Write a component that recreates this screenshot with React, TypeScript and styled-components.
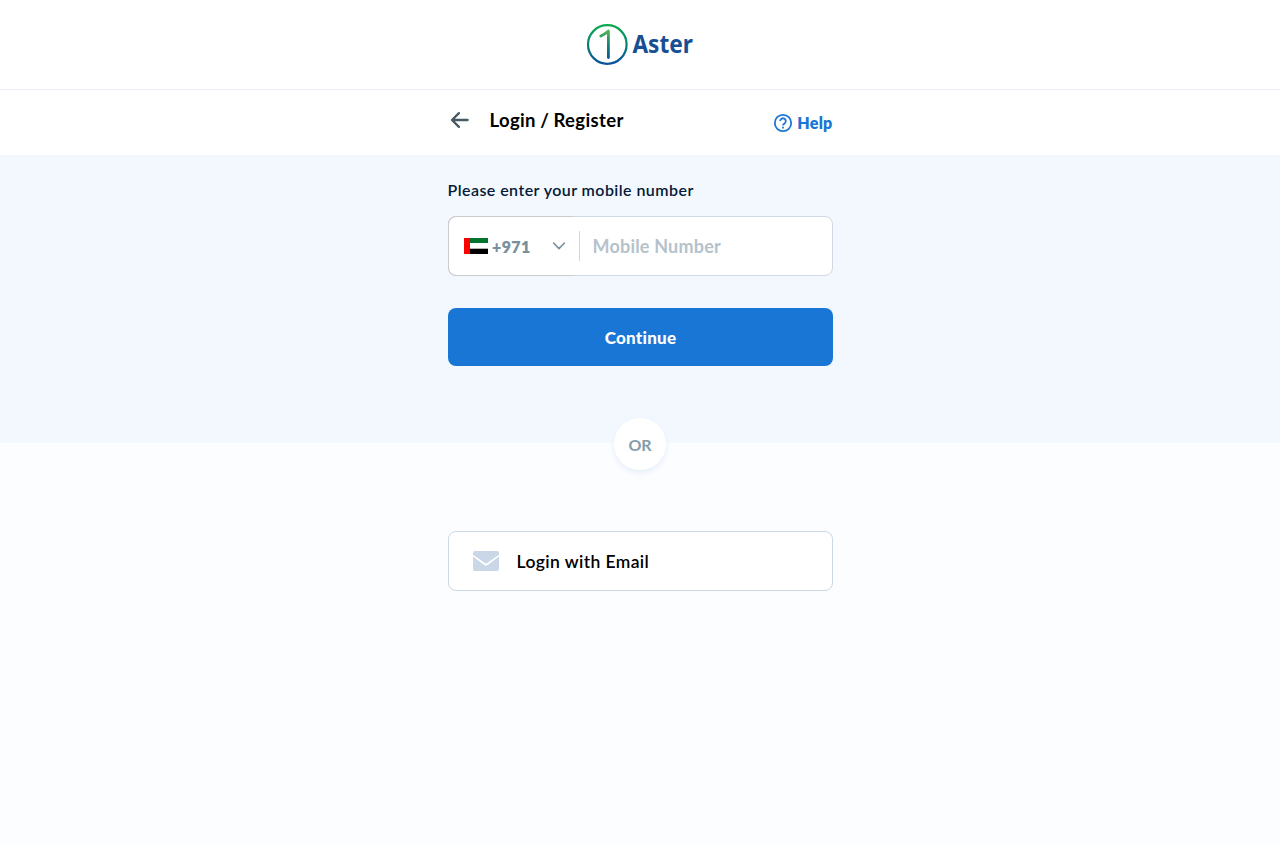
import React from 'react';
import styled, { createGlobalStyle } from 'styled-components';

const GlobalStyle = createGlobalStyle`
  * { box-sizing: border-box; }
  body { margin: 0; background: #fcfdff; font-family: Lato, "Open Sans", sans-serif; }
  button, input { font-family: inherit; margin: 0; }
`;

const Page = styled.div`
  display: flex;
  flex-direction: column;
  min-height: 845px;
`;

const Brand = styled.header`
  display: flex;
  justify-content: center;
  height: 90px;
  padding-top: 20px;
  background: #fff;
  border-bottom: 1px solid #edf0f7;
`;

const LogoArt = styled.svg`
  overflow: visible;
`;

const TitleBar = styled.div`
  display: flex;
  justify-content: center;
  height: 65px;
  background: #fff;
`;

const Column = styled.div`
  display: flex;
  flex-direction: column;
  width: 385px;
  margin-left: 1px;
`;

const TitleRow = styled.div`
  display: flex;
  justify-content: space-between;
  width: 385px;
`;

const Heading = styled.div`
  display: flex;
  align-items: flex-start;
  padding: 18px 0 0;
`;

const BackButton = styled.button`
  display: flex;
  width: 24px;
  height: 24px;
  padding: 0;
  border: 0;
  background: none;
`;

const Title = styled.h1`
  margin: 0 0 0 18px;
  font-size: 18.5px;
  line-height: 25px;
  font-weight: 700;
  letter-spacing: 0.35px;
  word-spacing: -0.5px;
  color: #000;
`;

const Help = styled.a`
  display: flex;
  align-items: center;
  height: 24px;
  margin-top: 21px;
  gap: 4px;
  font-size: 16px;
  line-height: 20px;
  font-weight: 800;
  letter-spacing: 0.25px;
  color: #1976d5;
`;

const PhoneSection = styled.section`
  display: flex;
  justify-content: center;
  height: 288px;
  background: #f3f8ff;
`;

const Label = styled.label`
  margin: 23px 0 0 -0.5px;
  height: 25px;
  line-height: 23px;
  font-size: 16px;
  font-weight: 600;
  letter-spacing: 0.44px;
  color: #031b37;
`;

const PhoneField = styled.div`
  display: flex;
  align-items: center;
  height: 60px;
  margin-top: 13px;
  background: #fff;
  border: 1px solid #cfd8e4;
  border-radius: 8px;
`;

const CountryPicker = styled.div`
  display: flex;
  align-items: center;
  align-self: stretch;
  width: 124px;
  margin: -1px 0 -1px -1px;
  padding-left: 15px;
  border: 1px solid #ccc;
  border-right: 0;
  border-radius: 8px 0 0 8px;
`;

const DialCode = styled.span`
  width: 60px;
  margin-left: 4px;
  padding-top: 2px;
  font-size: 16px;
  line-height: 20px;
  font-weight: 800;
  letter-spacing: 0.4px;
  color: #78909c;
`;

const Divider = styled.span`
  width: 1px;
  height: 30px;
  margin-left: 7px;
  background: #cfd8dc;
`;

const PhoneInput = styled.input`
  flex: 1;
  min-width: 0;
  height: 40px;
  padding: 0 12px 0 12.5px;
  border: 0;
  outline: 0;
  background: transparent;
  font-size: 18px;
  font-weight: 700;
  letter-spacing: 0.2px;
  &::placeholder { color: #b4c2cb; opacity: 1; }
`;

const ContinueButton = styled.button`
  height: 58px;
  margin-top: 32px;
  padding: 0;
  border: 0;
  border-radius: 8px;
  background: #1976d5;
  color: #fff;
  font-size: 17px;
  font-weight: 900;
  letter-spacing: 0.25px;
`;

const EmailSection = styled.section`
  display: flex;
  flex-direction: column;
  align-items: center;
`;

const OrBadge = styled.div`
  display: flex;
  align-items: center;
  justify-content: center;
  width: 52px;
  height: 52px;
  margin-top: -25px;
  padding-top: 1px;
  border-radius: 50%;
  background: #fff;
  box-shadow: 0 3px 6px #e5effa;
  font-size: 16px;
  font-weight: 700;
  color: #859daa;
`;

const EmailButton = styled.button`
  display: flex;
  align-items: center;
  height: 60px;
  margin-top: 61px;
  padding: 0 24px;
  border: 1px solid #cbd8e6;
  border-radius: 8px;
  background: #fff;
  color: #000;
`;

const EmailText = styled.span`
  margin-left: 17.5px;
  font-size: 17.5px;
  font-weight: 600;
  letter-spacing: 0.4px;
`;

const Logo = () => (
  <LogoArt width="110" height="48" viewBox="0 0 110 48" role="img" aria-label="Aster">
    <defs>
      <linearGradient id="ring" x1="0" y1="4" x2="0" y2="45" gradientUnits="userSpaceOnUse">
        <stop offset="0" stopColor="#0ead4d" />
        <stop offset="0.5" stopColor="#078070" />
        <stop offset="1" stopColor="#0a509e" />
      </linearGradient>
      <linearGradient id="digit" x1="0" y1="10" x2="0" y2="40" gradientUnits="userSpaceOnUse">
        <stop offset="0" stopColor="#55b553" />
        <stop offset="0.5" stopColor="#168178" />
        <stop offset="1" stopColor="#0a509e" />
      </linearGradient>
    </defs>
    <circle cx="22.3" cy="24.5" r="19.3" fill="none" stroke="url(#ring)" strokeWidth="2.2" />
    <path d="M15.8 16.1 Q20.2 13.8 23.4 11.1 L23.4 37.5" fill="none" stroke="url(#digit)" strokeWidth="2.8" strokeLinecap="round" strokeLinejoin="round" />
    <text x="47.4" y="32.6" textLength="60.5" lengthAdjust="spacingAndGlyphs" fontFamily="Noto Sans, Open Sans, sans-serif" fontWeight="700" fontSize="24.2" fill="#174f94">Aster</text>
  </LogoArt>
);

const BackArrow = () => (
  <svg width="24" height="24" viewBox="0 0 24 24" fill="none" stroke="#455a64" strokeWidth="2.3" strokeLinecap="round" strokeLinejoin="round">
    <path d="M19.6 12H4.1M10.9 5.1L4 12l6.9 6.9" />
  </svg>
);

const HelpIcon = () => (
  <svg width="20" height="20" viewBox="0 0 20 20" fill="none" stroke="#1976d5" strokeWidth="1.8">
    <circle cx="10" cy="10" r="8.2" />
    <path d="M7.2 8.1a2.8 2.8 0 1 1 4.4 2.3c-1 .7-1.6 1.1-1.6 2.1" />
    <path d="M10 13.7v1.7" />
  </svg>
);

const Flag = () => (
  <svg width="24" height="16" viewBox="0 0 24 16">
    <path fill="#00732f" d="M0 0h24v5H0z" />
    <path fill="#fff" d="M0 5h24v6H0z" />
    <path fill="#000" d="M0 10.7h24V16H0z" />
    <path fill="#f00" d="M0 0h6v16H0z" />
  </svg>
);

const Chevron = () => (
  <svg width="14" height="10" viewBox="0 0 14 10" fill="none" stroke="#78909c" strokeWidth="1.6" strokeLinecap="round" strokeLinejoin="round">
    <path d="M1.6 2L7 7.6 12.4 2" />
  </svg>
);

const Envelope = () => (
  <svg width="26" height="20" viewBox="0 0 26 20" fill="#cad7e7">
    <path d="M2 0h22a2 2 0 0 1 2 2v1.7L14.2 12a2 2 0 0 1-2.4 0L0 3.7V2a2 2 0 0 1 2-2z" />
    <path d="M0 5.6l11.2 8.4a3 3 0 0 0 3.6 0L26 5.6V18a2 2 0 0 1-2 2H2a2 2 0 0 1-2-2z" />
  </svg>
);

export default function App() {
  return (
    <Page>
      <GlobalStyle />
      <Brand><Logo /></Brand>
      <TitleBar>
        <TitleRow>
          <Heading>
            <BackButton aria-label="Back"><BackArrow /></BackButton>
            <Title>Login / Register</Title>
          </Heading>
          <Help><HelpIcon />Help</Help>
        </TitleRow>
      </TitleBar>
      <PhoneSection>
        <Column>
          <Label htmlFor="mobile">Please enter your mobile number</Label>
          <PhoneField>
            <CountryPicker>
              <Flag />
              <DialCode>+971</DialCode>
              <Chevron />
            </CountryPicker>
            <Divider />
            <PhoneInput id="mobile" placeholder="Mobile Number" />
          </PhoneField>
          <ContinueButton>Continue</ContinueButton>
        </Column>
      </PhoneSection>
      <EmailSection>
        <OrBadge>OR</OrBadge>
        <Column>
          <EmailButton>
            <Envelope />
            <EmailText>Login with Email</EmailText>
          </EmailButton>
        </Column>
      </EmailSection>
    </Page>
  );
}
